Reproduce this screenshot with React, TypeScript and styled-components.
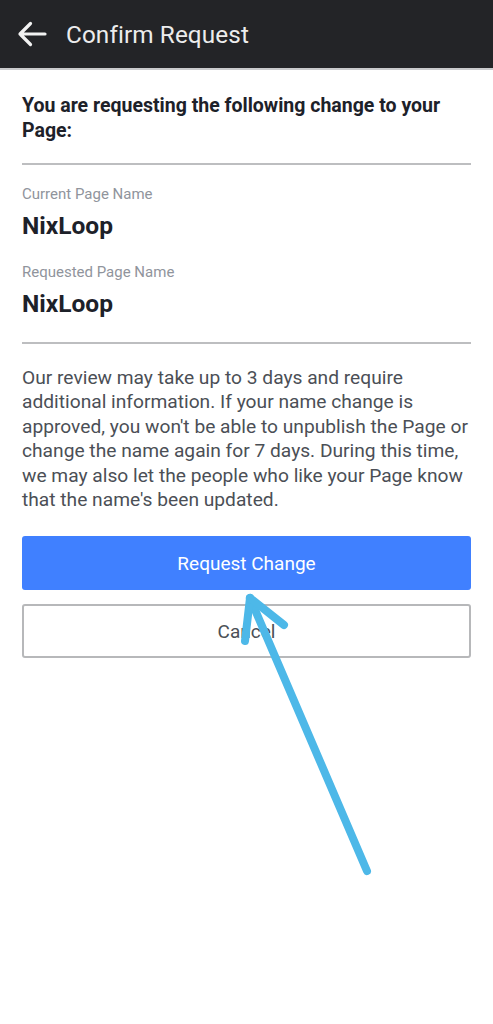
import styled, { createGlobalStyle } from 'styled-components';

const GlobalStyle = createGlobalStyle`
  html, body {
    margin: 0;
    padding: 0;
    background: #ffffff;
    font-family: Roboto, 'Noto Sans', sans-serif;
  }
`;

export default function App() {
  return (
    <>
      <GlobalStyle />
      <Screen>
        <TopBar>
          <BackButton aria-label="Back">
            <svg width="30" height="26" viewBox="0 0 30 26" fill="none">
              <path
                d="M28 13H3M13.5 2.5L3 13l10.5 10.5"
                stroke="#f2f2f2"
                strokeWidth="3.2"
                strokeLinecap="round"
                strokeLinejoin="round"
              />
            </svg>
          </BackButton>
          <Title>Confirm Request</Title>
        </TopBar>

        <Body>
          <Intro>You are requesting the following change to your Page:</Intro>
          <Divider $top={20} />

          <Field $top={18}>
            <FieldLabel>Current Page Name</FieldLabel>
            <FieldValue>NixLoop</FieldValue>
          </Field>
          <Field $top={20}>
            <FieldLabel>Requested Page Name</FieldLabel>
            <FieldValue>NixLoop</FieldValue>
          </Field>

          <Divider $top={23} />

          <Notice>
            Our review may take up to 3 days and require additional information. If your name change is
            approved, you won't be able to unpublish the Page or change the name again for 7 days.
            During this time, we may also let the people who like your Page know that the name's been
            updated.
          </Notice>

          <Actions>
            <Button $primary>Request Change</Button>
            <Button>Cancel</Button>
          </Actions>
        </Body>

        {/* hand-drawn annotation arrow laid over the buttons */}
        <Annotation width="493" height="1024" viewBox="0 0 493 1024">
          <g stroke="#4db8e8" strokeWidth="8" strokeLinecap="round" strokeLinejoin="round" fill="none">
            <path d="M367 871L250 598" />
            <path d="M250 598L245 641" />
            <path d="M250 598L284 625" />
          </g>
        </Annotation>
      </Screen>
    </>
  );
}

const Screen = styled.div`
  position: relative;
  width: 493px;
  min-height: 1024px;
  background: #ffffff;
  overflow: hidden;
`;

const TopBar = styled.header`
  display: flex;
  align-items: center;
  height: 70px;
  padding: 0 0 0 17px;
  background: #232427;
  border-bottom: 2px solid #c9cacc;
  box-sizing: border-box;
`;

const BackButton = styled.div`
  display: flex;
  align-items: center;
  width: 30px;
  height: 26px;
  margin-right: 19px;
`;

const Title = styled.h1`
  margin: 0;
  font-size: 24.3px;
  font-weight: 400;
  color: #ececec;
  letter-spacing: 0.1px;
`;

const Body = styled.main`
  padding: 23px 22px 0 22px;
`;

const Intro = styled.p`
  margin: 0;
  font-size: 19.5px;
  line-height: 25px;
  font-weight: 700;
  color: #1d2129;
`;

const Divider = styled.hr<{ $top: number }>`
  margin: ${(p) => p.$top}px 0 0;
  border: none;
  height: 2px;
  background: #bdbec0;
`;

const Field = styled.div<{ $top: number }>`
  display: flex;
  flex-direction: column;
  gap: 6px;
  margin-top: ${(p) => p.$top}px;
`;

const FieldLabel = styled.span`
  font-size: 15px;
  line-height: 22px;
  color: #90949c;
`;

const FieldValue = styled.span`
  font-size: 24.5px;
  line-height: 30px;
  font-weight: 700;
  color: #1d2129;
`;

const Notice = styled.p`
  margin: 22px 0 0;
  font-size: 19.2px;
  line-height: 24.4px;
  color: #4b4f56;
`;

const Actions = styled.div`
  display: flex;
  flex-direction: column;
  gap: 14px;
  margin-top: 24px;
`;

const Button = styled.button<{ $primary?: boolean }>`
  height: 54px;
  border-radius: 3px;
  font-family: Roboto, 'Noto Sans', sans-serif;
  font-size: 19px;
  cursor: pointer;
  background: ${(p) => (p.$primary ? '#4080ff' : '#ffffff')};
  color: ${(p) => (p.$primary ? '#ffffff' : '#4b4f56')};
  border: ${(p) => (p.$primary ? 'none' : '2px solid #b7b8ba')};
`;

const Annotation = styled.svg`
  position: absolute;
  top: 0;
  left: 0;
  pointer-events: none;
`;
